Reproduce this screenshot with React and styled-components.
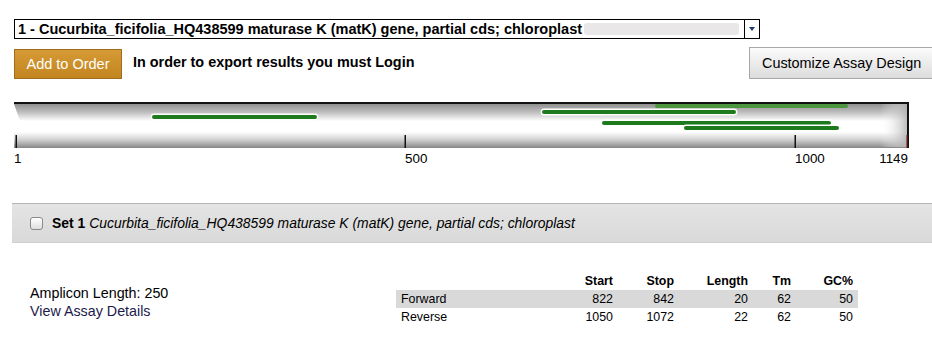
import React from 'react';
import styled, { createGlobalStyle } from 'styled-components';

const GlobalStyle = createGlobalStyle`
  html, body {
    margin: 0;
    padding: 0;
    background: #fff;
    overflow: hidden;
  }
  body {
    font-family: "Liberation Sans", Arial, sans-serif;
    color: #000;
  }
`;

const Page = styled.div`
  width: 932px;
  height: 341px;
  box-sizing: border-box;
  padding-left: 14px;
  overflow: hidden;
`;

const SelectBox = styled.div`
  margin-top: 19px;
  width: 746px;
  height: 20px;
  box-sizing: border-box;
  border: 1px solid #000;
  display: flex;
  align-items: center;
`;

const SelectText = styled.span`
  font-size: 14.5px;
  font-weight: 700;
  padding-left: 3px;
  white-space: nowrap;
`;

const SelectFill = styled.span`
  flex: 1;
  height: 12px;
  margin: 0 5px 0 2px;
  background: #e9e7e7;
  border-radius: 3px;
`;

const ArrowBox = styled.span`
  width: 14px;
  height: 100%;
  border-left: 1px solid #000;
  display: flex;
  align-items: center;
  justify-content: center;

  &::before {
    content: '';
    width: 0;
    height: 0;
    border-left: 3px solid transparent;
    border-right: 3px solid transparent;
    border-top: 4px solid #1f3a6e;
  }
`;

const ActionRow = styled.div`
  margin-top: 8px;
  width: 935px;
  display: flex;
  align-items: center;
`;

const OrderButton = styled.button`
  width: 108px;
  height: 30px;
  margin-top: 2px;
  border: 1px solid #a06d1c;
  background: linear-gradient(#d69a36, #c2851f);
  color: #fff;
  font-family: "Liberation Sans", Arial, sans-serif;
  font-size: 14.5px;
  padding: 0;
`;

const LoginNote = styled.span`
  margin-left: 11px;
  margin-top: -3px;
  font-size: 14.4px;
  font-weight: 700;
`;

const CustomizeButton = styled.button`
  margin-left: auto;
  width: 200px;
  height: 32px;
  border: 1px solid #a8a8a8;
  background: linear-gradient(#fbfbfb, #dcdcdc);
  font-family: "Liberation Sans", Arial, sans-serif;
  font-size: 14.4px;
  color: #000;
  text-align: left;
  padding: 0 0 0 12px;
`;

const MapSection = styled.div`
  margin-top: 23px;
  width: 895px;
`;

const AxisLabels = styled.div`
  position: relative;
  height: 16px;
  margin-top: 3px;
  font-size: 13.4px;
`;

const AxisLabel = styled.span`
  position: absolute;
  top: 0;
  line-height: 15px;
  white-space: nowrap;
`;

const SetBar = styled.div`
  margin-top: 36px;
  margin-left: -2px;
  height: 40px;
  box-sizing: border-box;
  border-top: 1px solid #b4b4b4;
  border-bottom: 1px solid #cfcfcf;
  background: linear-gradient(#e4e4e4, #d9d9d9);
  display: flex;
  align-items: center;
  padding-left: 18px;
  font-size: 13.9px;
`;

const Check = styled.span`
  width: 11px;
  height: 11px;
  border: 1px solid #8a8a8a;
  border-radius: 3px;
  background: linear-gradient(#fff, #dedede);
  margin-right: 9px;
`;

const SetName = styled.span`
  font-style: italic;
  margin-left: 4px;
`;

const Details = styled.div`
  margin-top: 29px;
  display: flex;
  align-items: flex-start;
`;

const Summary = styled.div`
  margin-left: 16px;
  margin-top: 12px;
  width: 366px;
  font-size: 14.3px;
  line-height: 18px;
`;

const DetailsLink = styled.div`
  color: #1c1a4a;
`;

const PrimerGrid = styled.div`
  display: grid;
  grid-template-columns: 172px 50px 61px 74px 43px 62px;
  font-size: 12.4px;
  color: #000;
`;

const Cell = styled.div`
  height: 18px;
  line-height: 18px;
  padding: 0 5px;
  white-space: nowrap;
  text-align: ${p => (p.$label ? 'left' : 'right')};
  font-weight: ${p => (p.$head ? 700 : 400)};
  background: ${p => (p.$shaded ? '#d9d9d9' : 'transparent')};
`;

const TICKS = [
  { value: 1, x: 2 },
  { value: 500, x: 391 },
  { value: 1000, x: 781 },
  { value: 1149, x: 893 },
];

const HITS = [
  { x1: 641, x2: 834, y: 2, light: true },
  { x1: 528, x2: 722, y: 8 },
  { x1: 138, x2: 303, y: 13 },
  { x1: 588, x2: 817, y: 19 },
  { x1: 670, x2: 825, y: 24 },
];

const HEAD = ['', 'Start', 'Stop', 'Length', 'Tm', 'GC%'];
const PRIMERS = [
  ['Forward', 822, 842, 20, 62, 50],
  ['Reverse', 1050, 1072, 22, 62, 50],
];

function SequenceMap() {
  return (
    <svg width="895" height="46" viewBox="0 0 895 46" style={{ display: 'block' }}>
      <defs>
        <linearGradient id="topShade" x1="0" y1="0" x2="0" y2="1">
          <stop offset="0" stopColor="#8a8a8a" />
          <stop offset="0.5" stopColor="#bdbdbd" />
          <stop offset="1" stopColor="#ffffff" />
        </linearGradient>
        <linearGradient id="bottomShade" x1="0" y1="0" x2="0" y2="1">
          <stop offset="0" stopColor="#ffffff" />
          <stop offset="0.5" stopColor="#cfcfcf" />
          <stop offset="1" stopColor="#868686" />
        </linearGradient>
        <linearGradient id="rightShade" x1="0" y1="0" x2="1" y2="0">
          <stop offset="0" stopColor="#ffffff" stopOpacity="0" />
          <stop offset="1" stopColor="#b0b0b0" stopOpacity="0.9" />
        </linearGradient>
      </defs>
      <rect x="0" y="0" width="895" height="46" fill="#fff" />
      <rect x="0" y="1" width="895" height="18" fill="url(#topShade)" />
      <polygon points="0,2 0,19 6,19" fill="#fff" />
      <rect x="0" y="30" width="895" height="16" fill="url(#bottomShade)" />
      <rect x="866" y="1" width="28" height="44" fill="url(#rightShade)" />
      <rect x="0" y="0" width="895" height="2" fill="#111" />
      <rect x="893" y="0" width="2" height="46" fill="#111" />
      {HITS.map((h, i) => (
        <g key={i}>
          <rect x={h.x1 - 1.5} y={h.y - 1.5} width={h.x2 - h.x1 + 3} height="7" rx="3.5" fill="#fff" opacity={h.light ? 0 : 0.95} />
          <rect x={h.x1} y={h.y} width={h.x2 - h.x1} height="4" rx="2" fill={h.light ? '#4c9640' : '#1d7a1d'} />
        </g>
      ))}
      {TICKS.map(t => (
        <rect key={t.value} x={t.x - 0.5} y="33" width="1.5" height="13" fill={t.value === 1149 ? '#5a1414' : '#111'} />
      ))}
    </svg>
  );
}

function App() {
  return (
    <>
      <GlobalStyle />
      <Page>
        <SelectBox>
          <SelectText>1 - Cucurbita_ficifolia_HQ438599 maturase K (matK) gene, partial cds; chloroplast</SelectText>
          <SelectFill />
          <ArrowBox />
        </SelectBox>

        <ActionRow>
          <OrderButton>Add to Order</OrderButton>
          <LoginNote>In order to export results you must Login</LoginNote>
          <CustomizeButton>Customize Assay Design</CustomizeButton>
        </ActionRow>

        <MapSection>
          <SequenceMap />
          <AxisLabels>
            {TICKS.map(t => (
              <AxisLabel
                key={t.value}
                style={t.value === 1149 ? { right: 895 - t.x - 1 } : { left: t.value === 1 ? 0 : t.x }}
              >
                {t.value}
              </AxisLabel>
            ))}
          </AxisLabels>
        </MapSection>

        <SetBar>
          <Check />
          <b>Set 1</b>
          <SetName>Cucurbita_ficifolia_HQ438599 maturase K (matK) gene, partial cds; chloroplast</SetName>
        </SetBar>

        <Details>
          <Summary>
            <div>Amplicon Length: 250</div>
            <DetailsLink>View Assay Details</DetailsLink>
          </Summary>
          <PrimerGrid>
            {HEAD.map((h, i) => (
              <Cell key={h || 'blank'} $head $label={i === 0}>{h}</Cell>
            ))}
            {PRIMERS.map((row, r) =>
              row.map((v, i) => (
                <Cell key={`${r}-${i}`} $label={i === 0} $shaded={r === 0}>{v}</Cell>
              ))
            )}
          </PrimerGrid>
        </Details>
      </Page>
    </>
  );
}

export default App;
